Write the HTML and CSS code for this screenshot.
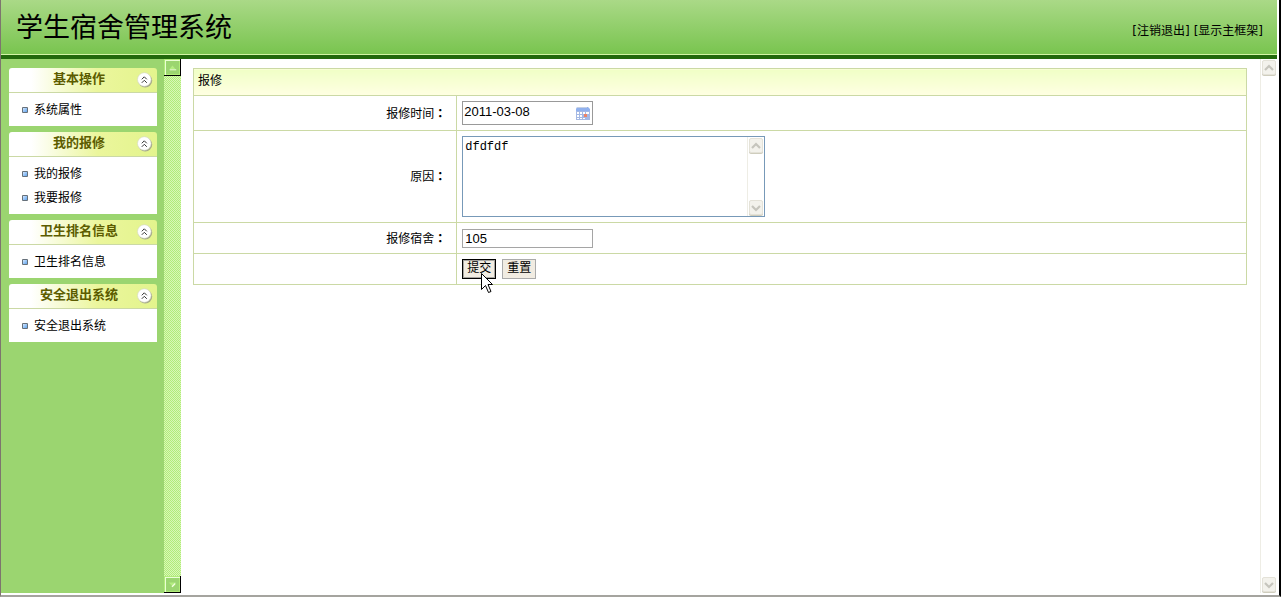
FILE: index.html
```html
<!DOCTYPE html>
<html lang="zh-CN">
<head>
<meta charset="utf-8">
<title>学生宿舍管理系统</title>
<link rel="stylesheet" href="styles.css">
</head>
<body>
<svg class="defs" width="0" height="0" aria-hidden="true">
  <defs>
    <linearGradient id="bead" x1="0" y1="0" x2="1" y2="1"><stop offset="0" stop-color="#d4e8ff"/><stop offset="1" stop-color="#5fa3ee"/></linearGradient>
    <symbol id="fold" viewBox="0 0 16 16">
      <circle cx="8.2" cy="8.6" r="7" fill="#a5a98a"/>
      <circle cx="7.3" cy="7.500" r="6.800" fill="#fff" stroke="#d4d6c4" stroke-width=".6"/>
      <path d="M4.800 7.300 7.300 4.800 9.800 7.300M4.800 10.800 7.300 8.300 9.800 10.800" fill="none" stroke="#333"/>
    </symbol>
    <symbol id="dot" viewBox="0 0 6 6">
      <rect width="6" height="6" rx="1" fill="#66707a"/>
      <rect x="1" y="1" width="4" height="4" fill="url(#bead)"/>
    </symbol>
    <symbol id="up" viewBox="0 0 10 8"><path d="M1 6 5 2 9 6" fill="none" stroke="#c6c5bd" stroke-width="2.200"/></symbol>
    <symbol id="down" viewBox="0 0 10 8"><path d="M1 2 5 6 9 2" fill="none" stroke="#c6c5bd" stroke-width="2.200"/></symbol>
  </defs>
</svg>
<div class="window">
  <header class="banner">
    <h1 class="title">学生宿舍管理系统</h1>
    <nav class="tools"><a href="#">[注销退出]</a><a href="#">[显示主框架]</a></nav>
  </header>
  <div class="frames">
    <aside class="sidebar">
      <section class="group">
        <h2 class="group-head"><span>基本操作</span><button class="fold" type="button" aria-label="收起"><svg><use href="#fold"/></svg></button></h2>
        <ul class="group-list"><li><svg><use href="#dot"/></svg><a href="#">系统属性</a></li></ul>
      </section>
      <section class="group">
        <h2 class="group-head"><span>我的报修</span><button class="fold" type="button" aria-label="收起"><svg><use href="#fold"/></svg></button></h2>
        <ul class="group-list"><li><svg><use href="#dot"/></svg><a href="#">我的报修</a></li><li><svg><use href="#dot"/></svg><a href="#">我要报修</a></li></ul>
      </section>
      <section class="group">
        <h2 class="group-head"><span>卫生排名信息</span><button class="fold" type="button" aria-label="收起"><svg><use href="#fold"/></svg></button></h2>
        <ul class="group-list"><li><svg><use href="#dot"/></svg><a href="#">卫生排名信息</a></li></ul>
      </section>
      <section class="group">
        <h2 class="group-head"><span>安全退出系统</span><button class="fold" type="button" aria-label="收起"><svg><use href="#fold"/></svg></button></h2>
        <ul class="group-list"><li><svg><use href="#dot"/></svg><a href="#">安全退出系统</a></li></ul>
      </section>
    </aside>
    <div class="side-scroll">
      <button class="green-arrow" type="button" aria-label="向上"><svg viewBox="0 0 17 17"><path d="M6 10.500 9 7l3 3.500" fill="#b4ed80"/><path d="M6 11.500h7" stroke="#f4ffe0"/></svg></button>
      <button class="green-arrow" type="button" aria-label="向下"><svg viewBox="0 0 17 17"><path d="M5 7h7L9 11z" fill="#b4ed80"/><path d="M8 11 12 7v2l-3 3z" fill="#f4ffe0"/></svg></button>
    </div>
    <main class="content">
      <form class="form">
        <table class="sheet">
          <colgroup><col class="col-label"><col></colgroup>
          <thead><tr><th class="caption" colspan="2">报修</th></tr></thead>
          <tbody>
            <tr><th class="label"><label for="date">报修时间<span class="colon" lang="zh-TW">：</span></label></th>
              <td><div class="date-box"><input id="date" type="text" value="2011-03-08">
                <svg class="calendar" viewBox="0 0 14 13"><path d="M1 0h11l2 2v3H0V2z" fill="#91b1ee"/><path d="M1 .5h10" stroke="#c5d0e4"/><path d="M0 4h14v9H0z" fill="#a5b9e4"/><path d="M1 5h2v2H1zM4 5h2v2H4zM7 5h2v2H7zM10 5h3v2h-3zM1 8h2v2H1zM4 8h2v2H4zM1 11h2v1H1zM4 11h2v1H4zM7 11h2v1H7z" fill="#fff"/><path d="M8 7h3v3H8z" fill="#ed8468"/></svg></div></td></tr>
            <tr><th class="label"><label for="reason">原因<span class="colon" lang="zh-TW">：</span></label></th>
              <td><div class="area-box"><textarea id="reason">dfdfdf</textarea>
                <div class="scrollbar"><button class="arrow" type="button" aria-label="向上"><svg><use href="#up"/></svg></button><button class="arrow" type="button" aria-label="向下"><svg><use href="#down"/></svg></button></div></div></td></tr>
            <tr><th class="label"><label for="room">报修宿舍<span class="colon" lang="zh-TW">：</span></label></th>
              <td><input class="text-box" id="room" type="text" value="105"></td></tr>
            <tr><th class="label"></th>
              <td><div class="actions"><button class="btn btn-active" type="submit">提交<svg class="pointer" viewBox="0 0 12 21"><path d="M.5.5v16l4-4 3 7 2.500-1-3-7h4.500z" fill="#fff" stroke="#000"/></svg></button><button class="btn" type="reset">重置</button></div></td></tr>
          </tbody>
        </table>
      </form>
    </main>
    <div class="scrollbar page-scroll"><button class="arrow" type="button" aria-label="向上"><svg><use href="#up"/></svg></button><button class="arrow" type="button" aria-label="向下"><svg><use href="#down"/></svg></button></div>
  </div>
</div>
</body>
</html>
```
FILE: styles.css
```css
* { box-sizing: border-box; }
body {
  margin: 0;
  font: 12px/16px "Liberation Sans", "Noto Sans CJK SC", sans-serif;
  color: #000;
  background: #fff;
}
a { color: inherit; text-decoration: none; }
button { padding: 0; font: inherit; color: inherit; border: 0; background: none; }
h1, h2, ul { margin: 0; padding: 0; }
.defs { display: block; height: 0; }
.window {
  display: flex;
  flex-direction: column;
  min-height: 100vh;
  border-left: 1px solid #7d756e;
  border-right: 2px solid #000;
  border-bottom: 2px solid #a5a49f;
  padding: 0 2px 2px 0;
}
.banner {
  display: flex;
  align-items: center;
  justify-content: space-between;
  height: 59px;
  padding: 0 14px 0 15px;
  border-bottom: 4px solid #22690c;
  background: linear-gradient(#aad987, #78c44e);
  box-shadow: inset 0 -1px #d3f5a5;
}
.title { font-size: 27px; line-height: 32px; font-weight: 400; }
.tools {
  display: flex;
  gap: 4px;
  padding-top: 6px;
  font-family: "DejaVu Sans", "Noto Sans CJK SC", sans-serif;
}
.frames { display: flex; flex: 1; }
.sidebar {
  display: flex;
  flex-direction: column;
  gap: 6px;
  width: 163px;
  padding: 9px 7px 9px 8px;
  background: #9bd570;
}
.group-head {
  display: flex;
  align-items: center;
  height: 25px;
  padding: 0 4px 0 12px;
  border-bottom: 1px solid #cbd9a5;
  border-radius: 3px 3px 0 0;
  background: linear-gradient(90deg, #fff 15%, #ebf69c 60%, #e3f48d);
  color: #5c5c00;
  font-size: 13px;
  line-height: 16px;
  font-weight: 700;
}
.group-head span { flex: 1; text-align: center; padding-bottom: 2px; }
.fold, .fold svg { display: block; width: 16px; height: 16px; }
.group-list { list-style: none; padding: 5px 16px 4px 13px; background: #fff; }
.group-list li { display: flex; align-items: center; gap: 6px; line-height: 24px; }
.group-list svg { width: 6px; height: 6px; }
.side-scroll {
  display: flex;
  flex-direction: column;
  justify-content: space-between;
  width: 17px;
  background: repeating-conic-gradient(#b1ec79 0 25%, #d9f7b8 0 50%) 0 0 / 2px 2px;
}
.green-arrow {
  width: 17px;
  height: 17px;
  border: solid #000;
  border-width: 0 1px 1px 0;
  background: #9bd570;
  box-shadow: inset 1px 1px #b1ec79, inset 2px 2px #eaffd4, inset -1px -1px #b1ec79;
}
.green-arrow svg { display: block; }
.content { flex: 1; padding: 9px 13px 9px 12px; }
.sheet {
  width: 100%;
  table-layout: fixed;
  border-collapse: collapse;
}
.col-label { width: 25%; }
.sheet th, .sheet td { border: 1px solid #cbd9a5; padding: 5px; }
.sheet .caption {
  padding: 4px 4px 6px;
  text-align: left;
  font-weight: 400;
  background: linear-gradient(#f0ffc6, #ffffe2);
}
.label { text-align: right; font-weight: 400; }
.sheet .label { padding-right: 10px; }
.colon { font-family: "Noto Sans CJK TC", sans-serif; font-weight: 700; }
input, textarea { margin: 0; padding: 0 2px; color: #000; font: inherit; background: #fff; outline: 0; }
.date-box {
  display: flex;
  align-items: center;
  width: 131px;
  height: 24px;
  border: 1px solid #999;
  padding-right: 2px;
}
.date-box input { flex: 1; min-width: 0; padding: 0 1px 3px; border: 0; font-size: 13px; }
.calendar { width: 14px; height: 13px; }
.area-box { display: flex; width: 303px; height: 81px; border: 1px solid #7799b8; }
.area-box textarea {
  flex: 1;
  border: 0;
  padding: 2px;
  resize: none;
  overflow: hidden;
  font: 12px/16px "Liberation Mono", monospace;
}
.scrollbar {
  display: flex;
  flex-direction: column;
  justify-content: space-between;
  width: 17px;
  padding: 1px;
  border-left: 1px solid #eeede5;
}
.arrow {
  display: flex;
  align-items: center;
  justify-content: center;
  width: 14px;
  height: 15px;
  border: 1px solid #e4e2d8;
  border-radius: 2px;
  background: #f3f2ec;
  box-shadow: 0 1px #cfcdbd;
}
.arrow svg { width: 10px; height: 8px; }
.text-box { display: block; width: 131px; height: 19px; border: 1px solid #a5a5a5; font-size: 13px; }
.sheet tr { height: 31px; }
.sheet thead tr { height: 27px; }
.actions { display: flex; gap: 6px; }
.btn {
  width: 34px;
  height: 20px;
  padding-bottom: 3px;
  border: 1px solid #aaa;
  background: #f1ece2;
}
.btn-active { position: relative; border-color: #000; box-shadow: inset 0 0 0 1px #a6a4a0; }
.pointer { position: absolute; left: 18px; top: 13px; width: 12px; height: 21px; }
```
